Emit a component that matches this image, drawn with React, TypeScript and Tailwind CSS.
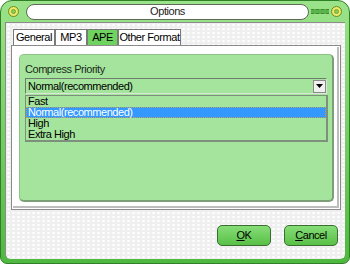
import React from "react";

const font = { fontFamily: '"Liberation Sans", Arial, sans-serif' };

function Ring() {
  return (
    <div className="w-[11px] h-[11px] rounded-full bg-[#e9e96a] border border-[#6b8a1c] flex items-center justify-center">
      <div className="w-[5px] h-[5px] rounded-full bg-[#7fcf5a] border border-[#8aa030]" />
    </div>
  );
}

const tabs = [
  { label: "General", w: "w-[42px]" },
  { label: "MP3", w: "w-[32px]" },
  { label: "APE", w: "w-[31px]" },
  { label: "Other Format", w: "w-[63px]" },
];
const items = ["Fast", "Normal(recommended)", "High", "Extra High"];

const App: React.FC = () => {
  return (
    <div
      className="w-[350px] h-[264px] flex flex-col bg-gradient-to-b from-[#9be38a] to-[#4fb840] border border-[#2f7f24] rounded-t-[12px] rounded-b-[7px] overflow-hidden text-[11px] tracking-[-0.45px] text-black"
      style={font}
    >
      {/* title bar */}
      <div className="h-[21px] flex items-center pl-[7px] pr-[7px] shrink-0">
        <Ring />
        <div className="ml-[7px] w-[283px] h-[16px] rounded-full bg-white border border-[#5b6b55] flex items-center justify-center text-[11px] text-[#222]">
          Options
        </div>
        <div className="flex-1 mx-[2px] h-[5px] border-y border-dashed border-[#3d8a30] bg-[#5cb24b]" />
        <Ring />
      </div>

      {/* body */}
      <div className="flex-1 mx-[4px] mb-[4px] bg-[#efefef] bg-[radial-gradient(#ffffff_1px,transparent_1.5px)] bg-[length:5px_4px] border-l border-t border-[#8c8c8c] rounded-b-[5px] flex flex-col pt-[6px] px-[5px]">
        <div className="flex pl-[2px] h-[16px]">
          {tabs.map((t) => (
            <div
              key={t.label}
              className={
                t.w +
                " h-[16px] flex items-center justify-center whitespace-nowrap border-t border-l border-r border-[#7a7a7a] " +
                (t.label === "APE" ? "bg-[#6fd35f]" : "bg-white")
              }
            >
              {t.label}
            </div>
          ))}
        </div>

        {/* tab panel */}
        <div className="w-[330px] h-[165px] bg-white border border-[#8a8a8a] p-[1px]">
          <div className="w-full h-full border-r-2 border-b-2 border-[#bdbdbd] pt-[7px] pl-[6px]">
            <div className="w-[315px] h-[148px] rounded-[5px] bg-[#a4e49c] border border-[#8fc488] border-b-2 border-r-2 border-b-[#7c9f78] border-r-[#7c9f78] pt-[8px] pl-[5px]">
              <div className="h-[13px] leading-[13px] text-[#1a2a1a]">Compress Priority</div>
              <div className="mt-[2px] w-[302px] h-[16px] bg-[#a4e49c] border border-[#6e7c6c] border-r-[#d8e8d6] border-b-[#d8e8d6] flex items-center pl-[2px]">
                <span className="flex-1">Normal(recommended)</span>
                <div className="w-[13px] h-[13px] bg-[#f0f0f0] border border-[#8a8a8a] flex items-center justify-center">
                  <svg width="7" height="4" viewBox="0 0 7 4">
                    <path d="M0 0h7L3.5 4z" fill="#000" />
                  </svg>
                </div>
              </div>
              <div className="mt-[1px] w-[303px] h-[47px] bg-[#a4e49c] border border-[#7f8f7d] border-r-2 border-b-2 flex flex-col">
                {items.map((it) => (
                  <div
                    key={it}
                    className={
                      "h-[11px] leading-[11px] pl-[2px] " +
                      (it === "Normal(recommended)"
                        ? "bg-[#3399ff] text-white outline outline-1 outline-dotted outline-[#c0a060] -outline-offset-1"
                        : "")
                    }
                  >
                    {it}
                  </div>
                ))}
              </div>
            </div>
          </div>
        </div>

        <div className="flex justify-end gap-[13px] pr-[2px] mt-[15px]">
          <button className="w-[54px] h-[21px] rounded-[5px] bg-gradient-to-b from-[#86dd76] to-[#58c047] border border-[#3a6f31]">
            <u>O</u>K
          </button>
          <button className="w-[54px] h-[21px] rounded-[5px] bg-gradient-to-b from-[#86dd76] to-[#58c047] border border-[#3a6f31]">
            <u>C</u>ancel
          </button>
        </div>
      </div>
    </div>
  );
};

export default App;
